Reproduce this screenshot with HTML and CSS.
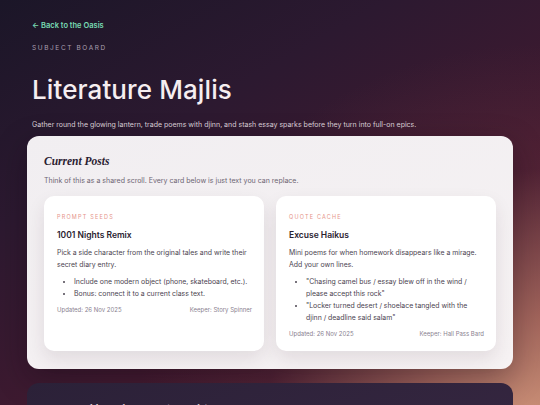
FILE: index.html
```html
<!DOCTYPE html>
<html lang="en">
<head>
<meta charset="utf-8">
<title>Literature Majlis</title>
<link rel="stylesheet" href="styles.css">
</head>
<body>
<div class="page">
  <header class="hero">
    <a class="back" href="#">← Back to the Oasis</a>
    <div class="eyebrow">SUBJECT BOARD</div>
    <h1 class="title">Literature Majlis</h1>
    <p class="lede">Gather round the glowing lantern, trade poems with djinn, and stash essay sparks before they turn into full-on epics.</p>
  </header>

  <section class="panel">
    <h2 class="panel-title">Current Posts</h2>
    <p class="panel-note">Think of this as a shared scroll. Every card below is just text you can replace.</p>
    <div class="cards">
      <article class="card">
        <div class="card-label">PROMPT SEEDS</div>
        <h3 class="card-title">1001 Nights Remix</h3>
        <p class="card-body">Pick a side character from the original tales and write their secret diary entry.</p>
        <ul class="card-list">
          <li>Include one modern object (phone, skateboard, etc.).</li>
          <li>Bonus: connect it to a current class text.</li>
        </ul>
        <div class="card-meta"><span>Updated: 26 Nov 2025</span><span>Keeper: Story Spinner</span></div>
      </article>
      <article class="card">
        <div class="card-label">QUOTE CACHE</div>
        <h3 class="card-title">Excuse Haikus</h3>
        <p class="card-body">Mini poems for when homework disappears like a mirage. Add your own lines.</p>
        <ul class="card-list">
          <li>"Chasing camel bus / essay blew off in the wind / please accept this rock"</li>
          <li>"Locker turned desert / shoelace tangled with the djinn / deadline said salam"</li>
        </ul>
        <div class="card-meta"><span>Updated: 26 Nov 2025</span><span>Keeper: Hall Pass Bard</span></div>
      </article>
    </div>
  </section>

  <section class="panel dark">
    <h2 class="panel-title">How to add or edit a post (no code)</h2>
  </section>
</div>
</body>
</html>
```

FILE: styles.css
```css
html, body {
  margin: 0;
  padding: 0;
}
body {
  min-height: 405px;
  font-family: Inter, "Noto Sans", sans-serif;
  color: #2b2230;
  background:
    radial-gradient(ellipse 75% 90% at 100% 100%, rgba(210, 152, 124, 1) 0%, rgba(176, 112, 98, 0.85) 30%, rgba(110, 50, 62, 0.3) 68%, rgba(90, 40, 55, 0) 100%),
    linear-gradient(150deg, #1b1628 0%, #2c1930 30%, #421a30 62%, #4f2236 100%);
  overflow: hidden;
}
.page {
  padding: 0 27px;
}
.hero {
  padding: 12px 5px 0;
}
.back {
  display: inline-block;
  font-size: 7.5px;
  line-height: 10px;
  font-weight: 600;
  color: #79dcb4;
  text-decoration: none;
}
.eyebrow {
  margin-top: 12px;
  font-size: 6.5px;
  line-height: 9px;
  letter-spacing: 1.6px;
  color: #a99fb0;
}
.title {
  margin: 20px 0 0;
  font-size: 26px;
  line-height: 34px;
  font-weight: 500;
  color: #f6eef0;
  letter-spacing: 0.1px;
}
.lede {
  margin: 13px 0 0;
  font-size: 7px;
  line-height: 10px;
  color: #d8ccd4;
}
.panel {
  margin-top: 6px;
  background: linear-gradient(160deg, #f1eef1 0%, #f6f2f3 100%);
  border-radius: 12px;
  padding: 18px 17px 18px;
  box-shadow: 0 10px 30px rgba(20, 8, 20, 0.35);
}
.panel-title {
  margin: 0;
  font-family: "Liberation Serif", "DejaVu Serif", serif;
  font-style: italic;
  font-weight: 700;
  font-size: 11.5px;
  line-height: 15px;
  color: #2a2030;
}
.panel-note {
  margin: 7px 0 0;
  font-size: 7px;
  line-height: 10px;
  color: #6d6572;
}
.cards {
  margin-top: 10px;
  display: grid;
  grid-template-columns: 1fr 1fr;
  gap: 12px;
}
.card {
  background: #ffffff;
  border-radius: 10px;
  padding: 17px 12px 12px 13px;
  box-shadow: 0 8px 18px rgba(60, 30, 50, 0.1);
}
.card-label {
  font-size: 5.5px;
  line-height: 8px;
  letter-spacing: 1.2px;
  color: #e6958a;
}
.card-title {
  margin: 8px 0 0;
  font-size: 8.5px;
  line-height: 12px;
  font-weight: 600;
  color: #2a2230;
}
.card-body {
  margin: 6px 0 0;
  font-size: 6.9px;
  line-height: 12px;
  color: #4b4450;
}
.card-list {
  margin: 5px 0 0;
  padding-left: 17px;
  padding-right: 2px;
  font-size: 6.9px;
  line-height: 12px;
  color: #4b4450;
}
.card-meta {
  margin-top: 5px;
  display: flex;
  justify-content: space-between;
  font-size: 6px;
  line-height: 10px;
  color: #8a8290;
}
.panel.dark {
  margin-top: 14px;
  padding-top: 19px;
  background: linear-gradient(160deg, #2b2138 0%, #352640 100%);
  box-shadow: none;
}
.panel.dark .panel-title {
  color: #eadfe2;
  font-weight: 400;
}
```
